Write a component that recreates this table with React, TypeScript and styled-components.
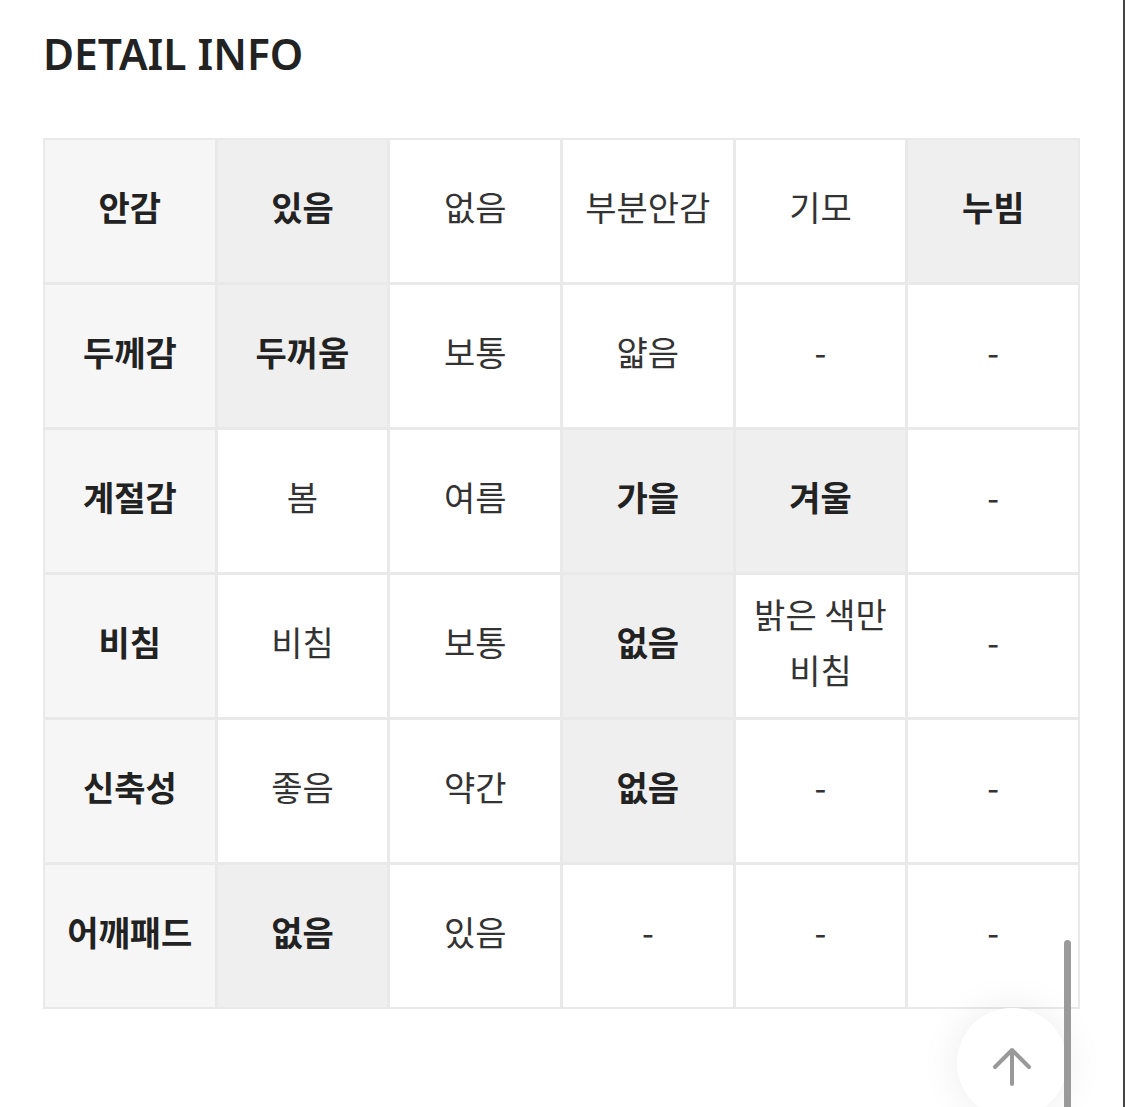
import React from "react";
import styled, { createGlobalStyle } from "styled-components";

const Global = createGlobalStyle`
  html, body { margin: 0; padding: 0; background: #fff; }
  body { font-family: "Noto Sans", "Noto Sans CJK KR", sans-serif; }
`;

const Page = styled.div`
  box-sizing: border-box;
  width: 1125px;
  min-height: 1107px;
  padding: 32px 45px 0 43px;
  border-right: 2px solid #444;
  overflow: hidden;
`;

const Title = styled.h1`
  margin: 0 0 62px 0;
  font-family: "Noto Sans", sans-serif;
  font-size: 42.5px;
  line-height: 44px;
  font-weight: 600;
  color: #222;
  letter-spacing: 0;
`;

const Grid = styled.div`
  display: grid;
  grid-template-columns: repeat(6, 1fr);
  grid-auto-rows: 142px;
  gap: 3px;
  padding: 2px;
  background: #e9e9e9;
  width: 1037px;
  box-sizing: border-box;
`;

type Kind = "label" | "hl" | "plain";

const Cell = styled.div<{ $kind: Kind }>`
  display: flex;
  align-items: center;
  justify-content: center;
  text-align: center;
  font-family: "Noto Sans CJK KR", "Noto Sans", sans-serif;
  font-size: 34px;
  line-height: 56px;
  padding: 0 6px 9px;
  box-sizing: border-box;
  background: ${(p) =>
    p.$kind === "label" ? "#f6f6f6" : p.$kind === "hl" ? "#efefef" : "#ffffff"};
  font-weight: ${(p) => (p.$kind === "plain" ? 400 : 700)};
  color: ${(p) => (p.$kind === "plain" ? "#333" : "#222")};
`;

const TopButton = styled.button`
  position: fixed;
  right: 58px;
  bottom: -11px;
  width: 110px;
  height: 110px;
  border-radius: 50%;
  border: none;
  background: #fff;
  box-shadow: 0 0 40px rgba(0, 0, 0, 0.08);
  display: flex;
  align-items: flex-start;
  justify-content: center;
  padding-top: 36px;
  box-sizing: border-box;
  z-index: 1;
`;

const ScrollThumb = styled.div`
  position: fixed;
  left: 1064px;
  top: 940px;
  width: 7px;
  height: 200px;
  border-radius: 4px;
  background: #9a9a9a;
  z-index: 2;
`;

type Row = [string, ...Array<[string, boolean]>];

const rows: Row[] = [
  ["안감", ["있음", true], ["없음", false], ["부분안감", false], ["기모", false], ["누빔", true]],
  ["두께감", ["두꺼움", true], ["보통", false], ["얇음", false], ["-", false], ["-", false]],
  ["계절감", ["봄", false], ["여름", false], ["가을", true], ["겨울", true], ["-", false]],
  ["비침", ["비침", false], ["보통", false], ["없음", true], ["밝은 색만\n비침", false], ["-", false]],
  ["신축성", ["좋음", false], ["약간", false], ["없음", true], ["-", false], ["-", false]],
  ["어깨패드", ["없음", true], ["있음", false], ["-", false], ["-", false], ["-", false]],
];

const Multi = styled.span`
  white-space: pre-line;
`;

export default function App() {
  return (
    <>
      <Global />
      <Page>
        <Title>DETAIL INFO</Title>
        <Grid>
          {rows.map((r, i) => {
            const [label, ...vals] = r;
            return (
              <React.Fragment key={i}>
                <Cell $kind="label">{label}</Cell>
                {vals.map(([t, hl], j) => (
                  <Cell key={j} $kind={hl ? "hl" : "plain"}>
                    <Multi>{t}</Multi>
                  </Cell>
                ))}
              </React.Fragment>
            );
          })}
        </Grid>
      </Page>
      <TopButton aria-label="맨 위로">
        <svg width="44" height="44" viewBox="0 0 44 44" fill="none">
          <path
            d="M22 40 V6 M5 23 L22 6 L39 23"
            stroke="#999"
            strokeWidth="4"
            strokeLinecap="round"
            strokeLinejoin="round"
          />
        </svg>
      </TopButton>
      <ScrollThumb />
    </>
  );
}
